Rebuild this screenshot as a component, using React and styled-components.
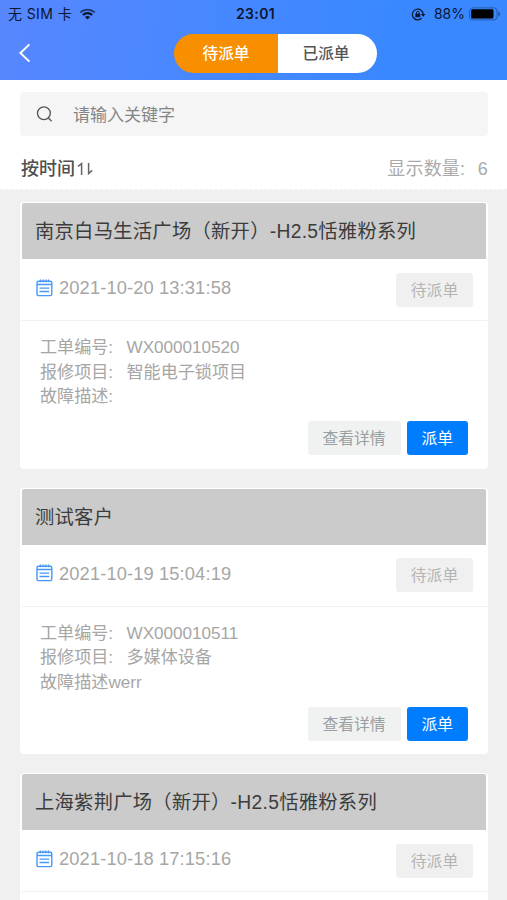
import styled, { createGlobalStyle } from "styled-components";

const GlobalStyle = createGlobalStyle`
  * {
    box-sizing: border-box;
  }

  body {
    margin: 0;
    background: #f0f0f0;
    font-family: "Liberation Sans", "Noto Sans CJK SC", sans-serif;
  }

  button {
    border: 0;
    padding: 0;
    font-family: inherit;
  }
`;

const Page = styled.main`
  width: 507px;
  height: 900px;
  overflow: hidden;
  background: #f0f0f0;
`;

const Header = styled.header`
  height: 80px;
  background: linear-gradient(100deg, #5787ff 0%, #3a88ff 75%);
`;

const StatusBar = styled.div`
  display: grid;
  grid-template-columns: 1fr auto 1fr;
  align-items: center;
  height: 28px;
  padding: 0 6px 0 8px;
  color: #0b1630;
  font-family: Inter, "Noto Sans CJK SC", sans-serif;
  font-size: 14px;
  line-height: 20px;
  white-space: pre;

  & .carrier {
    display: flex;
    align-items: center;
    gap: 7px;
    letter-spacing: 0.4px;
  }

  & .time {
    padding-left: 2px;
    font-weight: 600;
    letter-spacing: 0.4px;
  }

  & .battery {
    display: flex;
    align-items: center;
    justify-content: flex-end;
  }

  & .percent {
    margin: 0 4px 0 8px;
  }
`;

const NavBar = styled.nav`
  display: grid;
  grid-template-columns: 174px 203px 1fr;
  align-items: center;
  height: 50px;
`;

const BackButton = styled.button`
  display: flex;
  width: 40px;
  padding-left: 18px;
  background: none;
`;

const Tabs = styled.div`
  display: flex;
  height: 39px;
  border-radius: 20px;
  overflow: hidden;
`;

const Tab = styled.button`
  width: ${({ $active }) => ($active ? "104px" : "99px")};
  padding-right: ${({ $active }) => ($active ? "0" : "3px")};
  background: ${({ $active }) => ($active ? "#f78f00" : "#fff")};
  color: ${({ $active }) => ($active ? "#fff" : "#555")};
  font-size: 15.7px;
  font-weight: 500;
  line-height: 37px;
`;

const Filters = styled.section`
  height: 110px;
  padding: 12px 19px 0 20px;
  background: #fff;
  border-bottom: 1px dashed #f0f0f0;
`;

const SearchBox = styled.label`
  display: flex;
  align-items: center;
  gap: 20px;
  height: 44px;
  padding-left: 16px;
  border-radius: 4px;
  background: #f5f5f5;

  & input {
    flex: 1;
    border: 0;
    padding: 3px 0 0;
    outline: 0;
    background: none;
    font-family: inherit;
    font-size: 17px;
    color: #444;
  }

  & input::placeholder {
    color: #858585;
    opacity: 1;
  }
`;

const SortRow = styled.div`
  display: flex;
  align-items: center;
  justify-content: space-between;
  height: 54px;
  padding-top: 11px;
  font-size: 18px;
  line-height: 26px;
  color: #aaa;

  & .sort {
    display: flex;
    align-items: center;
    padding-left: 1px;
    color: #505050;
    font-weight: 500;
  }

  & .count {
    display: flex;
    gap: 12.5px;
    letter-spacing: 0.2px;
  }
`;

const OrderList = styled.section`
  display: flex;
  flex-direction: column;
  gap: 19px;
  padding: 12px 19px 0 20px;
`;

const Card = styled.article`
  height: 266.7px;
  padding: 1px 2px 0;
  border-radius: 4px;
  background: #fff;
`;

const CardTitle = styled.h2`
  height: 56px;
  margin: 0;
  padding-left: 13px;
  border-radius: 2px 2px 0 0;
  background: #cbcbcb;
  color: #3c3c3c;
  font-size: 19.3px;
  font-weight: 400;
  letter-spacing: 0.28px;
  line-height: 58px;
  white-space: nowrap;
`;

const CardMeta = styled.div`
  display: flex;
  align-items: center;
  height: 62px;
  margin: 0 -1px;
  padding: 0 14px 0 15px;
  border-bottom: 1px solid #f1f1f1;

  & svg {
    margin-top: -4px;
  }

  & time {
    flex: 1;
    margin: -3px 0 0 6px;
    color: #a6a6a6;
    font-size: 18.3px;
    letter-spacing: 0.13px;
    line-height: 24px;
  }
`;

const StatusTag = styled.span`
  width: 77px;
  height: 34px;
  border-radius: 3px;
  background: #f0f0f0;
  color: #b4b4b4;
  font-size: 15.8px;
  line-height: 35px;
  text-align: center;
`;

const Details = styled.div`
  height: 100px;
  padding: 15px 18px 0;
  color: #a6a6a6;
  font-size: 17.1px;
  line-height: 24.5px;

  & p {
    display: flex;
    margin: 0;
  }

  & .label {
    width: 86.5px;
  }
`;

const Actions = styled.div`
  display: flex;
  justify-content: flex-end;
  gap: 6px;
  padding-right: 18px;
`;

const ActionButton = styled.button`
  width: ${({ $primary }) => ($primary ? "61.5px" : "93px")};
  height: 34px;
  border-radius: 3px;
  background: ${({ $primary }) => ($primary ? "#007dff" : "#f0f1f1")};
  color: ${({ $primary }) => ($primary ? "#fff" : "#98a0a3")};
  font-size: 15.8px;
  line-height: 35px;
`;

const orders = [
  {
    customer: "南京白马生活广场（新开）-H2.5恬雅粉系列",
    time: "2021-10-20 13:31:58",
    number: "WX000010520",
    project: "智能电子锁项目",
    fault: "",
  },
  {
    customer: "测试客户",
    time: "2021-10-19 15:04:19",
    number: "WX000010511",
    project: "多媒体设备",
    fault: "werr",
  },
  {
    customer: "上海紫荆广场（新开）-H2.5恬雅粉系列",
    time: "2021-10-18 17:15:16",
    number: "",
    project: "",
    fault: "",
  },
];

const WifiIcon = () => (
  <svg width="17" height="12" viewBox="0 0 17 12" fill="none" stroke="#0b1630">
    <path d="M1.3 4.4C5.4.6 11.6.6 15.7 4.4" strokeWidth="1.8" opacity=".75" />
    <path d="M3.8 7C6.5 4.5 10.5 4.5 13.2 7" strokeWidth="2.1" />
    <path d="M8.5 11.4L5.9 8.9C7.3 7.6 9.7 7.6 11.1 8.9Z" fill="#0b1630" stroke="none" />
  </svg>
);

const RotationLockIcon = () => (
  <svg width="15" height="13" viewBox="0 0 15 13" fill="none" stroke="#0b1630">
    <path d="M12.2 6.5A5.4 5.4 0 1 0 10.6 10.3" strokeWidth="1.2" />
    <path d="M10 6H14.4L12.2 8.8Z" fill="#0b1630" stroke="none" />
    <rect x="4.4" y="5.7" width="4.8" height="3.6" rx=".5" fill="#0b1630" stroke="none" />
    <path d="M5.4 6V4.8A1.4 1.4 0 0 1 8.2 4.8V6" strokeWidth="1" />
  </svg>
);

const BatteryIcon = () => (
  <svg width="32" height="14" viewBox="0 0 32 14">
    <rect x=".6" y=".9" width="27.5" height="12" rx="3" fill="none" stroke="#245aa8" />
    <rect x="2.2" y="2.2" width="22.3" height="9.4" rx="1.5" fill="#000" />
    <path d="M29.3 4.6Q31.3 5.2 31.3 6.9T29.3 9.2Z" fill="#245aa8" />
  </svg>
);

const BackIcon = () => (
  <svg width="13" height="20" viewBox="0 0 13 20" fill="none" stroke="#fff" strokeWidth="2">
    <path d="M11.4 1.4L2.4 10L11.4 18.6" />
  </svg>
);

const SearchIcon = () => (
  <svg width="17" height="17" viewBox="0 0 17 17" fill="none" stroke="#555" strokeWidth="1.3">
    <circle cx="7.9" cy="7.2" r="6.4" />
    <path d="M12.2 11.8L15.6 15.2" />
  </svg>
);

const SortIcon = () => (
  <svg width="20" height="14" viewBox="0 0 20 14" fill="none" stroke="#666" strokeWidth="1.5">
    <path d="M6.6 13V1.6L3 4.4" />
    <path d="M13.6 1V11.6L17.2 8.4" />
  </svg>
);

const CalendarIcon = () => (
  <svg width="17" height="18" viewBox="0 0 17 18" fill="none" stroke="#4598fa" strokeWidth="1.4">
    <rect x="1" y="2.2" width="14.8" height="14.4" rx="1.6" />
    <path d="M1 5.5H15.8M3.5 9.1H13.2M3.5 12.5H13.2M4.4 .5V3.2M7.1 .5V3.2M9.8 .5V3.2M12.5 .5V3.2" />
  </svg>
);

const OrderCard = ({ order }) => {
  return (
    <Card>
      <CardTitle>{order.customer}</CardTitle>
      <CardMeta>
        <CalendarIcon />
        <time>{order.time}</time>
        <StatusTag>待派单</StatusTag>
      </CardMeta>
      {order.number && (
        <>
          <Details>
            <p>
              <span className="label">工单编号:</span>
              <span>{order.number}</span>
            </p>
            <p>
              <span className="label">报修项目:</span>
              <span>{order.project}</span>
            </p>
            <p>
              <span>{order.fault ? "故障描述" : "故障描述:"}</span>
              <span>{order.fault}</span>
            </p>
          </Details>
          <Actions>
            <ActionButton>查看详情</ActionButton>
            <ActionButton $primary>派单</ActionButton>
          </Actions>
        </>
      )}
    </Card>
  );
};

const App = () => {
  return (
    <Page>
      <GlobalStyle />
      <Header>
        <StatusBar>
          <div className="carrier">
            <span>无 SIM 卡</span>
            <WifiIcon />
          </div>
          <span className="time">23:01</span>
          <div className="battery">
            <RotationLockIcon />
            <span className="percent">88%</span>
            <BatteryIcon />
          </div>
        </StatusBar>
        <NavBar>
          <BackButton aria-label="返回">
            <BackIcon />
          </BackButton>
          <Tabs>
            <Tab $active>待派单</Tab>
            <Tab>已派单</Tab>
          </Tabs>
        </NavBar>
      </Header>
      <Filters>
        <SearchBox>
          <SearchIcon />
          <input placeholder="请输入关键字" />
        </SearchBox>
        <SortRow>
          <span className="sort">
            按时间
            <SortIcon />
          </span>
          <span className="count">
            <span>显示数量:</span>
            <span>6</span>
          </span>
        </SortRow>
      </Filters>
      <OrderList>
        {orders.map((order) => (
          <OrderCard order={order} key={order.time} />
        ))}
      </OrderList>
    </Page>
  );
};

export default App;
